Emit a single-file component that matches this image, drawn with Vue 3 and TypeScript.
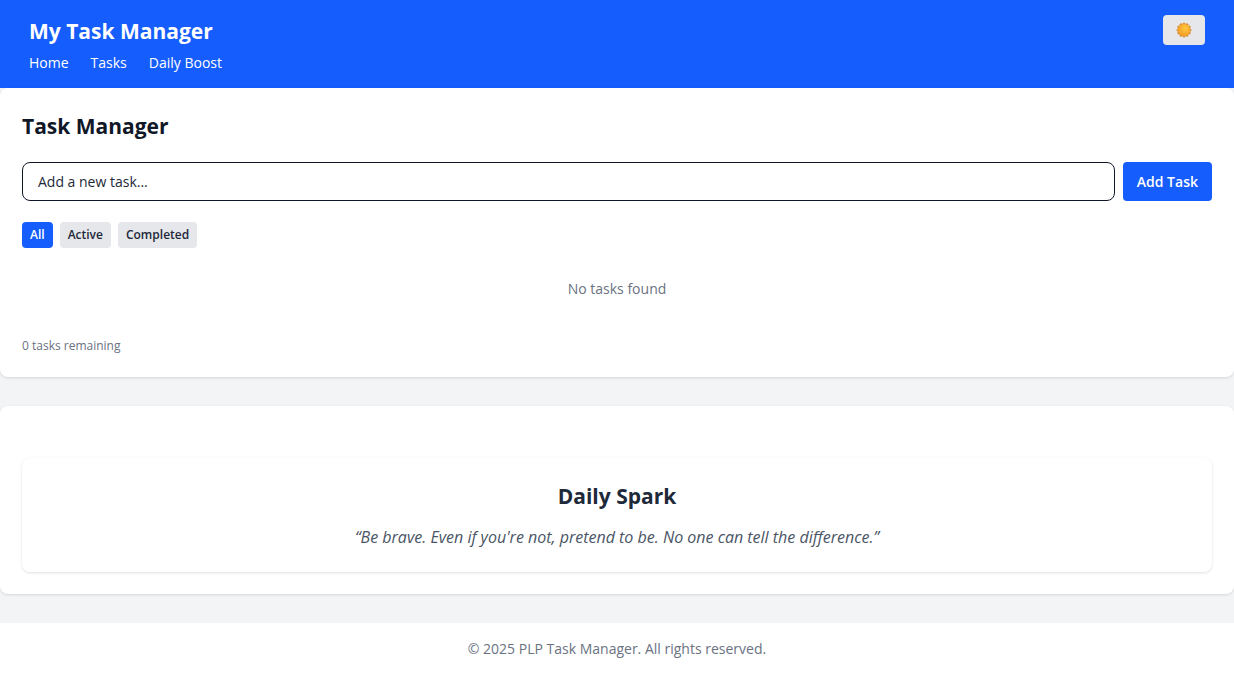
<script setup lang="ts">
import { computed, ref } from 'vue'

type Filter = 'All' | 'Active' | 'Completed'
interface Task {
  id: number
  text: string
  done: boolean
}

const filters: Filter[] = ['All', 'Active', 'Completed']
const current = ref<Filter>('All')
const draft = ref('')
const tasks = ref<Task[]>([])

const visible = computed(() =>
  tasks.value.filter((t) => current.value === 'All' || t.done === (current.value === 'Completed')),
)
const remaining = computed(() => tasks.value.filter((t) => !t.done).length)

function addTask(): void {
  const text = draft.value.trim()
  if (!text) return
  tasks.value.push({ id: Date.now(), text, done: false })
  draft.value = ''
}
</script>

<template>
  <div class="page">
    <header class="header">
      <div>
        <h1 class="brand">My Task Manager</h1>
        <nav class="nav">
          <a href="#home">Home</a>
          <a href="#tasks">Tasks</a>
          <a href="#boost">Daily Boost</a>
        </nav>
      </div>
      <button class="theme" type="button" aria-label="Toggle theme">
        <svg viewBox="0 0 32 32" width="16" height="16" aria-hidden="true">
          <defs>
            <radialGradient id="sun" cx="0.6" cy="0.35" r="0.7">
              <stop offset="0" stop-color="#ffc83f" />
              <stop offset="1" stop-color="#f39a25" />
            </radialGradient>
          </defs>
          <g fill="#dc902f">
            <circle
              v-for="n in 12"
              :key="n"
              cx="16"
              cy="4"
              r="3"
              :transform="`rotate(${n * 30} 16 16)`"
            />
          </g>
          <circle cx="16" cy="16" r="12" fill="url(#sun)" />
        </svg>
      </button>
    </header>

    <main>
      <section id="tasks" class="card">
        <h2 class="title">Task Manager</h2>
        <form class="entry" @submit.prevent="addTask">
          <input v-model="draft" type="text" placeholder="Add a new task..." aria-label="New task" />
          <button type="submit">Add Task</button>
        </form>
        <div class="filters">
          <button
            v-for="f in filters"
            :key="f"
            type="button"
            :class="{ active: f === current }"
            :aria-pressed="f === current"
            @click="current = f"
          >
            {{ f }}
          </button>
        </div>
        <p v-if="!visible.length" class="empty">No tasks found</p>
        <ul v-else class="list">
          <li v-for="t in visible" :key="t.id">
            <label><input v-model="t.done" type="checkbox" /> {{ t.text }}</label>
          </li>
        </ul>
        <p class="remaining">{{ remaining }} tasks remaining</p>
      </section>

      <section id="boost" class="card boost">
        <div class="spark">
          <h2>Daily Spark</h2>
          <blockquote>“Be brave. Even if you're not, pretend to be. No one can tell the difference.”</blockquote>
        </div>
      </section>
    </main>

    <footer class="footer">© 2025 PLP Task Manager. All rights reserved.</footer>
  </div>
</template>

<style>
body {
  margin: 0;
  background: #f3f4f6;
}
</style>

<style scoped>
.page {
  font-family: "Segoe UI", "Open Sans", "Noto Sans", sans-serif;
  font-size: 14px;
  line-height: 22px;
  color: #101828;
}
h1,
h2,
p,
blockquote {
  margin: 0;
}
button,
input {
  font: inherit;
}
button {
  border: 0;
  border-radius: 4px;
  cursor: pointer;
}
.header {
  display: flex;
  justify-content: space-between;
  align-items: flex-start;
  padding: 15px 29px 14px;
  background: #155dfc;
  color: #fff;
}
.brand {
  font-size: 21px;
  line-height: 32px;
  font-weight: 700;
}
.nav {
  display: flex;
  gap: 22px;
  margin-top: 5px;
}
.nav a {
  color: #fff;
  text-decoration: none;
}
.theme {
  display: flex;
  padding: 7px 13px;
  background: #e5e7eb;
}
.card {
  padding: 22px;
  background: #fff;
  border-radius: 8px;
  box-shadow: 0 1px 3px rgba(0, 0, 0, 0.12);
}
.title {
  font-size: 21px;
  line-height: 32px;
  font-weight: 700;
}
.entry {
  display: flex;
  gap: 8px;
  margin-top: 20px;
}
.entry input {
  flex: 1;
  min-width: 0;
  box-sizing: border-box;
  padding: 7px 15px;
  height: 39px;
  border: 1px solid #101828;
  border-radius: 8px;
  background: #fff;
  color: #1e2939;
}
.entry input::placeholder {
  color: #1e2939;
  opacity: 1;
}
.entry button {
  padding: 8px 14px;
  background: #155dfc;
  color: #fff;
  font-weight: 600;
}
.filters {
  display: flex;
  gap: 7px;
  margin-top: 21px;
}
.filters button {
  padding: 4px 8px;
  font-size: 12px;
  line-height: 18px;
  font-weight: 600;
  background: #e5e7eb;
  color: #1e2939;
}
.filters button.active {
  background: #155dfc;
  color: #fff;
}
.empty {
  padding: 30px 0;
  text-align: center;
  color: #6a7282;
}
.list {
  margin: 0;
  padding: 30px 0;
  list-style: none;
}
.remaining {
  margin-top: 7px;
  font-size: 12px;
  line-height: 18px;
  color: #6a7282;
}
.boost {
  margin-top: 29px;
  padding-top: 52px;
}
.spark {
  padding: 22px;
  border-radius: 8px;
  box-shadow: 0 1px 3px rgba(0, 0, 0, 0.12);
  text-align: center;
}
.spark h2 {
  font-size: 21px;
  line-height: 32px;
  font-weight: 700;
  color: #1e2939;
}
.spark blockquote {
  margin-top: 12px;
  font-size: 16px;
  line-height: 26px;
  font-style: italic;
  color: #4a5565;
}
.footer {
  margin-top: 29px;
  padding: 15px;
  background: #fff;
  text-align: center;
  color: #6a7282;
}
</style>
